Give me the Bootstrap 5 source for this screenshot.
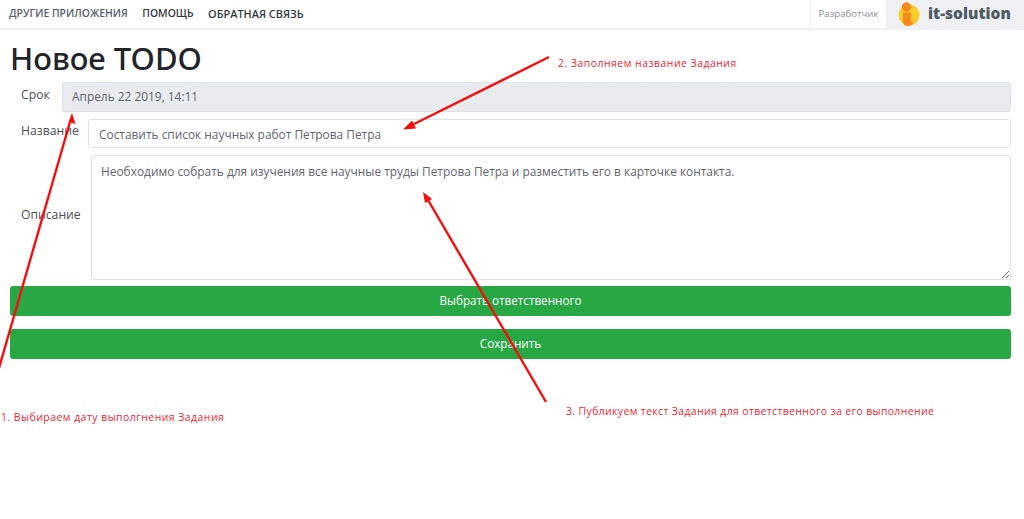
<!DOCTYPE html>
<html lang="ru">
<head>
  <meta charset="UTF-8">
  <title>Новое TODO</title>
  <meta name="viewport" content="width=device-width, initial-scale=1">
  <link href="https://cdn.jsdelivr.net/npm/bootstrap@5.3.3/dist/css/bootstrap.min.css" rel="stylesheet">
  <style>
    body {
      background: #fff;
      font-family: "Open Sans", sans-serif;
      font-size: 12px;
      color: #495057;
      height: 519px;
      overflow: hidden;
      position: relative;
    }
    .top-bar {
      height: 30px;
      border-bottom: 2px solid #f0f1f2;
    }
    .top-links {
      gap: 14.5px;
      padding-left: 9px;
      font-size: 10.4px;
      font-weight: 600;
      color: #343a40;
    }
    .top-links span:first-child { color: #56606a; }
    .top-links span:last-child { font-size: 10.9px; }
    .dev-cell {
      width: 76px;
      font-size: 9.6px;
      color: #868e96;
      border-left: 1px solid #eef0f2;
    }
    .logo-cell {
      width: 138px;
      background: #eef0f2;
      gap: 8px;
      padding-left: 12px;
      font-size: 15.5px;
      font-weight: 800;
      color: #4f5a65;
    }
    .page-title {
      font-family: "Noto Sans", sans-serif;
      font-size: 31px;
      font-weight: 500;
      line-height: 38px;
      color: #212529;
      margin: 9px 0 5px 10px;
    }
    .field-row {
      padding: 0 13px 0 21px;
      margin-bottom: 7px;
    }
    .desc-row { margin-bottom: 6px; }
    .field-label { font-size: 12.2px; color: #495057; }
    .term-label { width: 41px; height: 30px; padding-top: 4px; }
    .name-label { width: 67px; height: 29px; padding-top: 3px; }
    .desc-label { width: 70px; padding-bottom: 4px; }
    .fake-input {
      font-size: 11.9px;
      border: 1px solid #dee2e6;
      border-radius: 3px;
      color: #5f666d;
      padding: 0 10px;
      box-shadow: none;
    }
    .term-input { height: 30px; background: #e9ecef; padding-left: 9px; }
    .name-input { height: 29px; }
    .desc-input { height: 125px; padding: 6px 9px; line-height: 19px; }
    .action-btn {
      display: block;
      width: 1001px;
      height: 30px;
      margin: 0 0 13px 10px;
      padding: 0;
      font-size: 11.7px;
      font-weight: 500;
      background: #28a745;
      border: 0;
      border-radius: 3px;
      color: #fff;
    }
    .arrows {
      position: absolute;
      left: 0;
      top: 0;
      width: 1024px;
      height: 519px;
      pointer-events: none;
    }
    .note {
      position: absolute;
      font-size: 10.4px;
      color: #f5222d;
      line-height: 14px;
      white-space: nowrap;
    }
    .note-one { left: 1px; top: 410px; letter-spacing: .5px; }
    .note-two { left: 558px; top: 56px; letter-spacing: .52px; }
    .note-three { left: 566px; top: 404px; letter-spacing: .4px; }
  </style>
</head>
<body>
  <!-- Top bar -->
  <div class="top-bar d-flex justify-content-between">
    <div class="top-links d-flex align-items-center">
      <span>ДРУГИЕ ПРИЛОЖЕНИЯ</span>
      <span>ПОМОЩЬ</span>
      <span>ОБРАТНАЯ СВЯЗЬ</span>
    </div>
    <div class="d-flex">
      <div class="dev-cell d-flex align-items-center justify-content-center">Разработчик</div>
      <div class="logo-cell d-flex align-items-center">
        <svg width="22" height="24" viewBox="0 0 22 24">
          <circle cx="11" cy="13" r="10.500" fill="#f9cc2a"/>
          <circle cx="8.500" cy="5" r="4.700" fill="#f28a1c"/>
          <path d="M5 10.500h8v7.500c0 2 1 3 3 3-2 2-4 3-6.500 3-3 0-4.500-2-4.500-5z" fill="#f28a1c"/>
        </svg>
        <span>it-solution</span>
      </div>
    </div>
  </div>

  <h1 class="page-title">Новое TODO</h1>

  <form>
    <div class="field-row d-flex">
      <div class="field-label term-label flex-shrink-0">Срок</div>
      <div class="fake-input term-input form-control d-flex align-items-center">Апрель 22 2019, 14:11</div>
    </div>
    <div class="field-row d-flex">
      <div class="field-label name-label flex-shrink-0">Название</div>
      <input type="text" class="fake-input name-input form-control" value="Составить список научных работ Петрова Петра">
    </div>
    <div class="field-row desc-row d-flex align-items-center">
      <div class="field-label desc-label flex-shrink-0">Описание</div>
      <textarea class="fake-input desc-input form-control">Необходимо собрать для изучения все научные труды Петрова Петра и разместить его в карточке контакта.</textarea>
    </div>
    <button type="button" class="btn btn-success action-btn">Выбрать ответственного</button>
    <button type="button" class="btn btn-success action-btn">Сохранить</button>
  </form>

  <!-- Annotations drawn over the form -->
  <svg class="arrows" viewBox="0 0 1024 519">
    <g stroke="#f60d0d" stroke-width="2.4" fill="#f60d0d">
      <line x1="-1" y1="368" x2="70" y2="122"/>
      <path d="M72 113l3.500 11-7-2z" stroke="none"/>
      <line x1="549" y1="57" x2="412" y2="125"/>
      <path d="M403 129.500l9-9 4 8z" stroke="none"/>
      <line x1="546" y1="402" x2="428" y2="200"/>
      <path d="M423 192l9 7-7 4z" stroke="none"/>
    </g>
  </svg>
  <div class="note note-one">1. Выбираем дату выполгнения Задания</div>
  <div class="note note-two">2. Заполняем название Задания</div>
  <div class="note note-three">3. Публикуем текст Задания для ответственного за его выполнение</div>

  <script src="https://cdn.jsdelivr.net/npm/bootstrap@5.3.3/dist/js/bootstrap.bundle.min.js"></script>
</body>
</html>
